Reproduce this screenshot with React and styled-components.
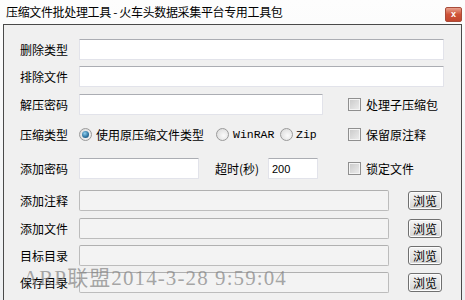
import React from 'react'
import styled, { createGlobalStyle } from 'styled-components'

const GlobalStyle = createGlobalStyle`
  html, body { margin: 0; padding: 0; background: #f0f0f0; }
  body {
    font-family: 'Noto Sans CJK SC', 'Noto Sans', sans-serif;
    font-size: 12px;
    color: #000;
  }
`

const Window = styled.div`
  position: relative;
  width: 465px;
  height: 300px;
  box-sizing: border-box;
  padding: 0 3px;
  background: linear-gradient(#fdfdfd, #eef0f2);
  display: flex;
  flex-direction: column;
  overflow: hidden;
`

const TitleBar = styled.div`
  height: 24px;
  flex: none;
  display: flex;
  align-items: flex-start;
  justify-content: space-between;
  padding-left: 3px;
`

const Title = styled.span`
  font-size: 12px;
  line-height: 24px;
  letter-spacing: -0.35px;
`

const CloseButton = styled.div`
  width: 15px;
  height: 13px;
  margin-top: 7px;
  border: 1px solid #a84c3a;
  border-radius: 2px;
  background: linear-gradient(#e8a18e, #cf5338 50%, #c2472f);
  color: #fff;
  font: bold 9px/13px 'Liberation Sans', sans-serif;
  text-align: center;
`

const Client = styled.div`
  flex: 1;
  border: 1px solid #4a4a4a;
  border-bottom: none;
  background: #f0f0f0;
  padding: 14px 0 0 16px;
`

const Row = styled.div`
  display: flex;
  align-items: center;
  height: 21px;
  margin-top: ${p => p.$mt || 0}px;
`

const Label = styled.span`
  flex: none;
  width: ${p => p.$w || 59}px;
  margin-left: ${p => p.$ml || 0}px;
  white-space: nowrap;
`

const TextBox = styled.div`
  flex: none;
  box-sizing: border-box;
  width: ${p => p.$w}px;
  height: ${p => p.$h || 21}px;
  margin-left: ${p => p.$ml || 0}px;
  padding: 0 3px;
  display: flex;
  align-items: center;
  font: 11px 'Liberation Sans', sans-serif;
  background: ${p => (p.$disabled ? '#f3f3f3' : '#fff')};
  border: 1px solid ${p => (p.$disabled ? '#bcbcbc' : '#e2e3ea')};
  border-top-color: ${p => (p.$disabled ? '#b0b0b0' : '#abadb3')};
  border-radius: ${p => (p.$disabled ? 2 : 1)}px;
`

const CheckOption = styled.label`
  display: inline-flex;
  align-items: center;
  gap: 5px;
  margin-left: ${p => p.$ml || 0}px;
  white-space: nowrap;
`

const CheckBox = styled.span`
  width: 11px;
  height: 11px;
  border: 1px solid #8f8f8f;
  box-shadow: inset 0 0 0 1px #f4f4f4;
  background: linear-gradient(135deg, #c8c8c8, #eeeeee);
`

const RadioOption = styled.label`
  flex: none;
  width: ${p => p.$w}px;
  display: inline-flex;
  align-items: center;
  gap: ${p => p.$gap || 4}px;
  white-space: nowrap;
`

const Radio = styled.span`
  position: relative;
  flex: none;
  width: 11px;
  height: 11px;
  border: 1px solid #9a9a9a;
  border-radius: 50%;
  background: radial-gradient(circle at 60% 60%, #fafafa, #d6d6d6);

  &::after {
    content: '';
    display: ${p => (p.$checked ? 'block' : 'none')};
    position: absolute;
    left: 2px;
    top: 2px;
    width: 7px;
    height: 7px;
    border-radius: 50%;
    background: radial-gradient(circle at 40% 35%, #8fd0f0, #2a6f9c 60%, #1d4e74);
  }
`

const Mono = styled.span`
  font: 11.5px 'Liberation Mono', monospace;
`

const BrowseButton = styled.button`
  flex: none;
  box-sizing: border-box;
  width: 34px;
  height: 19px;
  margin-left: 19px;
  padding: 0;
  border: 1px solid #707070;
  border-radius: 3px;
  background: linear-gradient(#f4f4f4, #e6e6e6 50%, #d4d4d4);
  box-shadow: inset 0 0 0 1px #fcfcfc;
  font: 12px 'Noto Sans CJK SC', sans-serif;
  color: #000;
  line-height: 17px;
`

// 截图软件留下的时间水印，压在最后一行上面
const Watermark = styled.div`
  position: absolute;
  left: 23px;
  top: 266px;
  font: 21px/24px 'Liberation Serif', 'Noto Sans CJK SC', serif;
  letter-spacing: 1.1px;
  color: rgba(130, 130, 130, 0.7);
  pointer-events: none;
  white-space: nowrap;
`

const pathRows = [
  { label: '添加注释', mt: 11 },
  { label: '添加文件', mt: 7 },
  { label: '目标目录', mt: 6 },
  { label: '保存目录', mt: 6 },
]

export default function App() {
  return (
    <>
      <GlobalStyle />
      <Window>
        <TitleBar>
          <Title>压缩文件批处理工具 - 火车头数据采集平台专用工具包</Title>
          <CloseButton>x</CloseButton>
        </TitleBar>
        <Client>
          <Row>
            <Label>删除类型</Label>
            <TextBox $w={365} />
          </Row>
          <Row $mt={6}>
            <Label>排除文件</Label>
            <TextBox $w={365} />
          </Row>
          <Row $mt={7}>
            <Label>解压密码</Label>
            <TextBox $w={244} />
            <CheckOption $ml={25}>
              <CheckBox />
              处理子压缩包
            </CheckOption>
          </Row>
          <Row $mt={9}>
            <Label>压缩类型</Label>
            <RadioOption $w={137}>
              <Radio $checked />
              使用原压缩文件类型
            </RadioOption>
            <RadioOption $w={64}>
              <Radio />
              <Mono>WinRAR</Mono>
            </RadioOption>
            <RadioOption $w={68} $gap={3}>
              <Radio />
              <Mono>Zip</Mono>
            </RadioOption>
            <CheckOption>
              <CheckBox />
              保留原注释
            </CheckOption>
          </Row>
          <Row $mt={13}>
            <Label>添加密码</Label>
            <TextBox $w={120} />
            <Label $w={53} $ml={16}>超时(秒)</Label>
            <TextBox $w={50}>200</TextBox>
            <CheckOption $ml={30}>
              <CheckBox />
              锁定文件
            </CheckOption>
          </Row>
          {pathRows.map(r => (
            <Row key={r.label} $mt={r.mt}>
              <Label>{r.label}</Label>
              <TextBox $w={310} $disabled />
              <BrowseButton>浏览</BrowseButton>
            </Row>
          ))}
        </Client>
        <Watermark>ARP联盟2014-3-28 9:59:04</Watermark>
      </Window>
    </>
  )
}
